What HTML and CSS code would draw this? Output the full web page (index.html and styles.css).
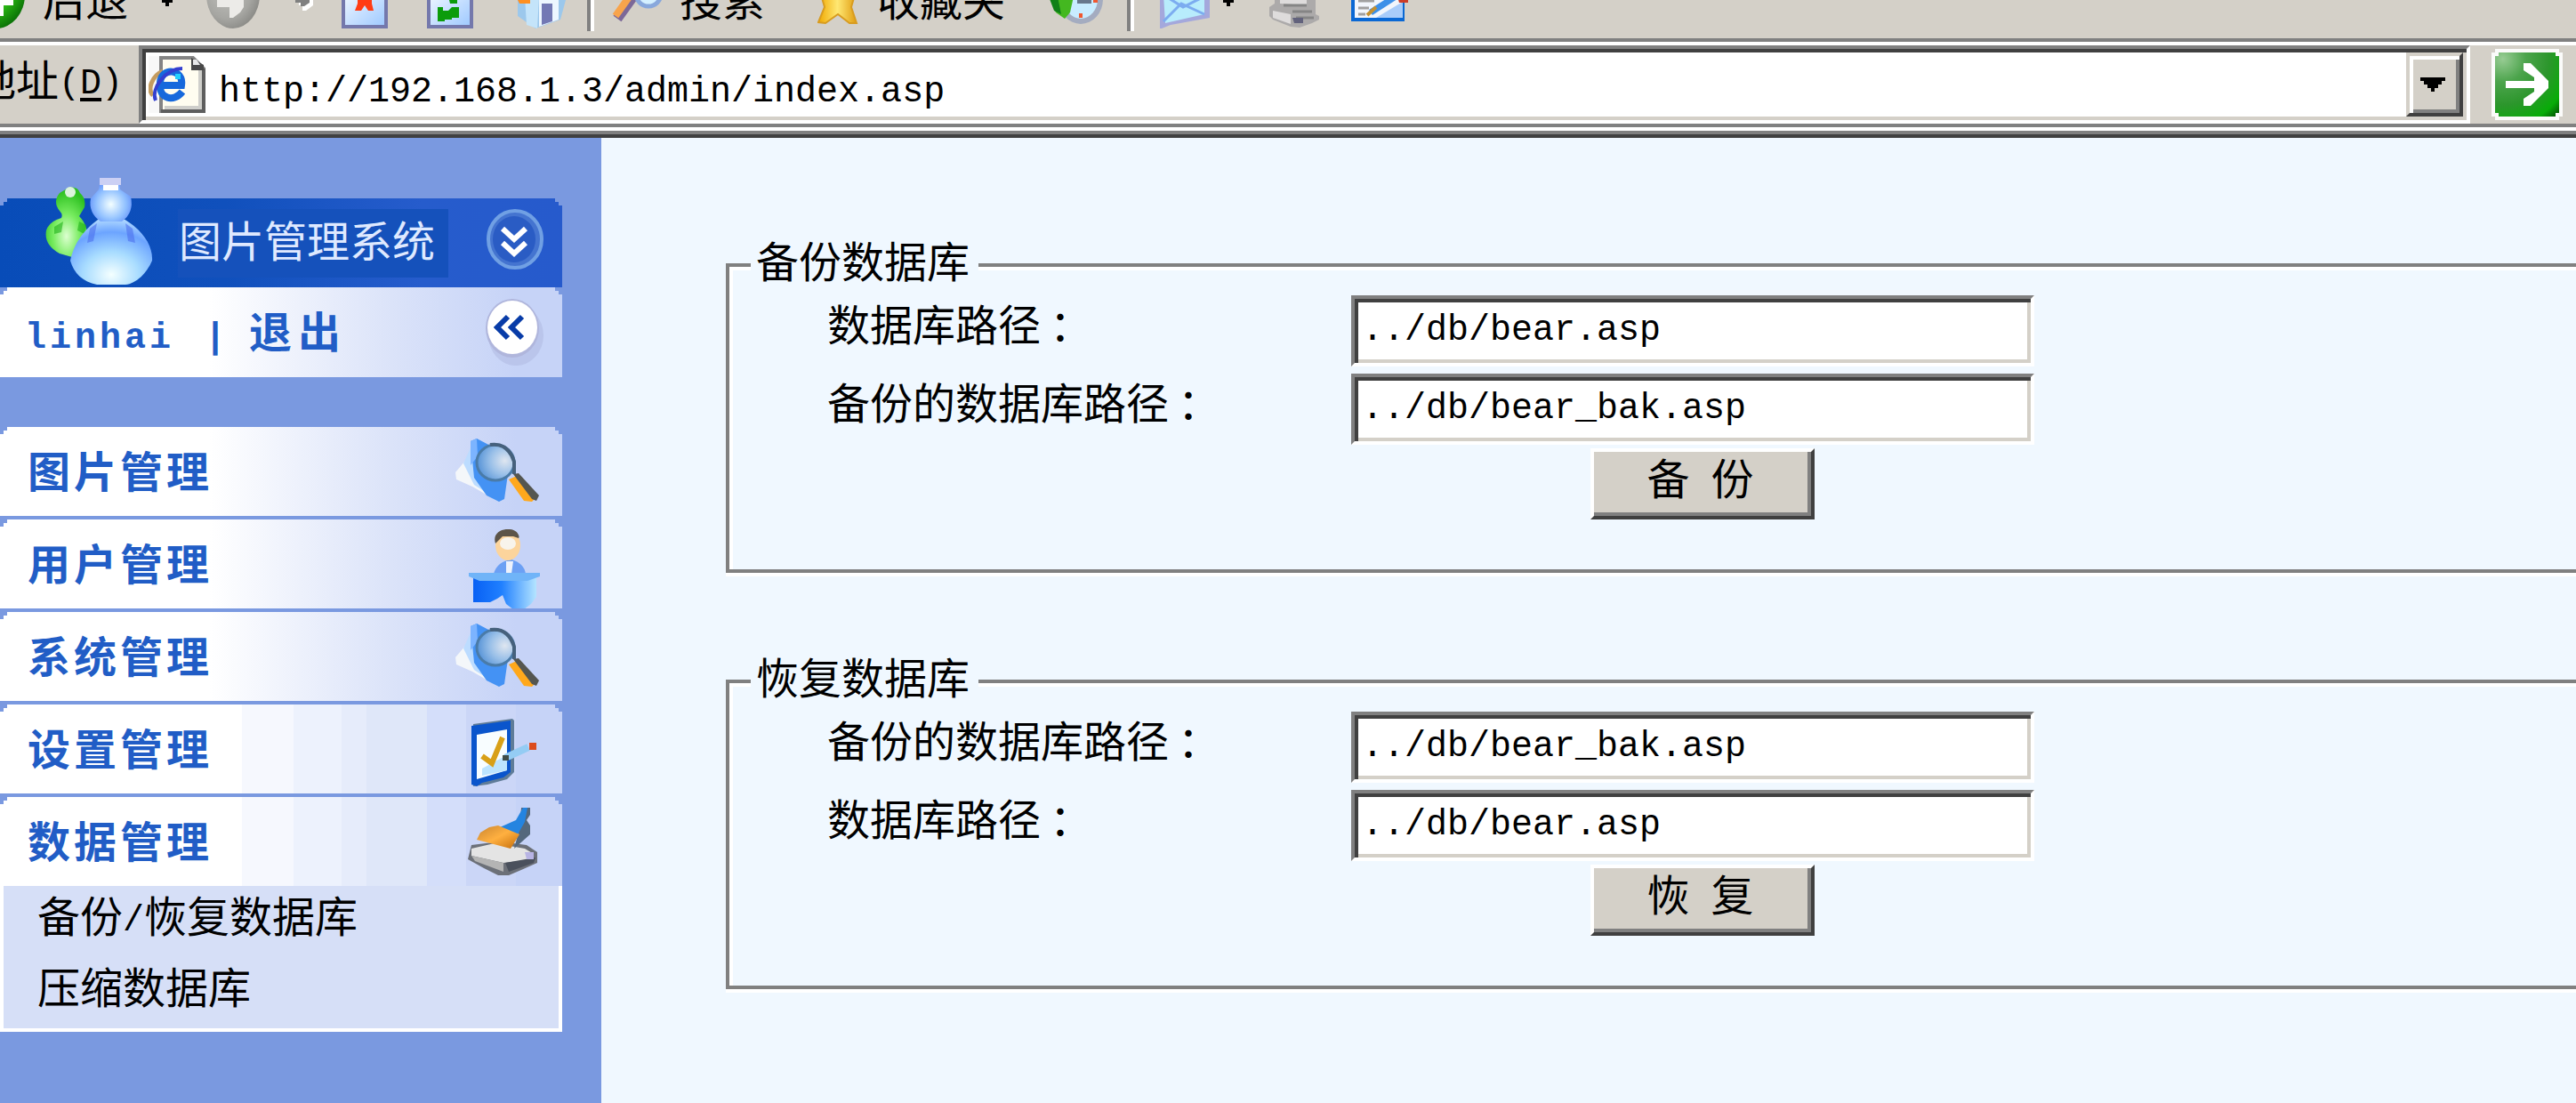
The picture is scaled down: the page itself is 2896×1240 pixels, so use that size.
FILE: index.html
```html
<!DOCTYPE html>
<html lang="zh-CN">
<head>
<meta charset="utf-8">
<title>图片管理系统</title>
<link rel="stylesheet" href="styles.css">
</head>
<body>
<svg class="defs" width="0" height="0" aria-hidden="true">
  <defs>
    <linearGradient id="paper" x1="0" y1="0" x2="1" y2="1"><stop offset="0" stop-color="#f4f9ff"/><stop offset="1" stop-color="#9cc8ff"/></linearGradient>
    <linearGradient id="gold" x1="0" y1="0" x2="1" y2="0"><stop offset="0" stop-color="#f0a800"/><stop offset=".5" stop-color="#ffe873"/><stop offset="1" stop-color="#e09c10"/></linearGradient>
    <radialGradient id="greenball" cx=".35" cy=".3" r=".75"><stop offset="0" stop-color="#9be890"/><stop offset=".6" stop-color="#2cbc14"/><stop offset="1" stop-color="#0a7006"/></radialGradient>
    <radialGradient id="grayball" cx=".4" cy=".4" r=".65"><stop offset="0" stop-color="#c4c4c0"/><stop offset=".7" stop-color="#a6a6a2"/><stop offset="1" stop-color="#8a8a86"/></radialGradient>
    <radialGradient id="gobtn" cx=".12" cy=".1" r="1.2"><stop offset="0" stop-color="#98cc94"/><stop offset=".3" stop-color="#4ca44c"/><stop offset=".6" stop-color="#2c962c"/><stop offset=".88" stop-color="#08ac08"/><stop offset="1" stop-color="#046404"/></radialGradient>
    <radialGradient id="bluefig" cx=".5" cy=".85" r=".85"><stop offset="0" stop-color="#f4ffff"/><stop offset=".4" stop-color="#a8dcff"/><stop offset=".75" stop-color="#6ca4ff"/><stop offset="1" stop-color="#b4dcff"/></radialGradient>
    <radialGradient id="bluehead" cx=".5" cy=".6" r=".6"><stop offset="0" stop-color="#f4ffff"/><stop offset=".6" stop-color="#90c0ff"/><stop offset="1" stop-color="#5c88f8"/></radialGradient>
    <radialGradient id="greenfig" cx=".5" cy=".7" r=".65"><stop offset="0" stop-color="#dcffd0"/><stop offset=".5" stop-color="#78ec60"/><stop offset="1" stop-color="#2cc020"/></radialGradient>
    <radialGradient id="lens" cx=".75" cy=".45" r=".8"><stop offset="0" stop-color="#dfe6f0"/><stop offset=".5" stop-color="#98bfe8"/><stop offset="1" stop-color="#4c8cd4"/></radialGradient>
    <linearGradient id="desk" x1="0" y1="0" x2="1" y2="0"><stop offset="0" stop-color="#0860f4"/><stop offset=".45" stop-color="#2080ff"/><stop offset="1" stop-color="#b4e4ff"/></linearGradient>
    <linearGradient id="brush" x1="0" y1="0" x2="1" y2="1"><stop offset="0" stop-color="#c88430"/><stop offset=".5" stop-color="#ffb040"/><stop offset="1" stop-color="#c46c08"/></linearGradient>
    <symbol id="magnifier" viewBox="0 0 96 74">
      <path d="M1 38 18 18 30 40 48 70 20 54 2 46Z" fill="#f4f7fa"/>
      <path d="M10 28 20 6 32 30 44 66 22 52Z" fill="#bcdcff"/>
      <path d="M18 3 25 0 44 10 60 40 56 68 50 71 36 64 22 44Z" fill="#4492f4"/>
      <path d="M18 3 25 0 26 20 18 30Z" fill="#7cb4ff"/>
      <path d="M61 46 70 42 92 66 87 71 78 70Z" fill="#ffa81c"/>
      <path d="M66 40 72 39 95 64 92 70 87 68Z" fill="#555650"/>
      <ellipse cx="46" cy="27" rx="21" ry="20" fill="url(#lens)" stroke="#4a7ba8" stroke-width="3"/>
      <path d="M40 7Q60 4 67 26L67 40" fill="none" stroke="#46617c" stroke-width="4"/>
    </symbol>
  </defs>
</svg>

<div class="toolbar">
  <svg class="tb back" width="30" height="43"><ellipse cx="-4" cy="-6" rx="32" ry="38" fill="url(#greenball)"/><path d="M0 0H15V6H4V18H0Z" fill="#fff"/></svg>
  <span class="tb-label after-back">后退</span>
  <svg class="tb caret" width="14" height="43"><path d="M1 0H13V3H9V7H5V3H1Z"/></svg>
  <svg class="tb forward" width="60" height="43"><ellipse cx="30" cy="-6" rx="30" ry="38" fill="url(#grayball)"/><path d="M12 0H42V8L38 14 30 20H26V8H12Z" fill="#ecebe8"/></svg>
  <svg class="tb caret2" width="20" height="43"><path d="M4 0H20V6L12 12H8V6H4Z" fill="#fff"/><path d="M0 0H16V3L10 7H6V3H0Z" fill="#808080"/></svg>
  <svg class="tb stop" width="52" height="43"><path d="M2-10H50V30H2Z" fill="url(#paper)" stroke="#7478ac" stroke-width="4"/><path d="M18-2H34V4L36 12H30L26 6 22 12H15L18 4Z" fill="#ff3c14"/></svg>
  <svg class="tb refresh" width="52" height="43"><path d="M2-10H50V30H2Z" fill="url(#paper)" stroke="#7478ac" stroke-width="4"/><path d="M24-4H34V4H26ZM12 8H18V12H24L28 8H36V20H28V22H20V24H12Z" fill="#0b9c0b"/></svg>
  <svg class="tb home" width="60" height="43"><path d="M0 0H6V18L26 32 54 22 60 0V-4H0Z" fill="#9cc8ec"/><path d="M14-4H30L28 32 16 28Z" fill="#c4e4fa"/><path d="M30 0 52-4V22L30 30Z" fill="#ecf6ff"/><path d="M33 4H45V24L33 28Z" fill="#7278b4"/><path d="M6 0H20V4H8Z" fill="#ff9020"/></svg>
  <i class="tb-sep sep1"></i>
  <svg class="tb search" width="56" height="43"><path d="M6 21 24-4" stroke="#7c6898" stroke-width="11"/><path d="M4 18 21-6" stroke="#f8a44c" stroke-width="8"/><ellipse cx="41" cy="-7" rx="14" ry="14" fill="#d4f0ff" stroke="#88a8dc" stroke-width="5"/></svg>
  <span class="tb-label after-search">搜索</span>
  <svg class="tb star" width="46" height="43"><path d="M4-6H42L38 8 44 26 36 26 23 16 9 26 1 25 8 8Z" fill="url(#gold)" stroke="#d89c20" stroke-width="2"/></svg>
  <span class="tb-label after-star">收藏夹</span>
  <svg class="tb history" width="62" height="43"><ellipse cx="36" cy="-1" rx="25" ry="28" fill="#a4acc0"/><ellipse cx="36" cy="-1" rx="19" ry="22" fill="#c8ecff"/><path d="M0-4H28L24 14 18 21 8 14Z" fill="#44b820"/><path d="M0-4H10L14 16 6 12Z" fill="#108018"/><path d="M34 15H38V20H34ZM50-2H55V3H50Z" fill="#f05830"/><path d="M32 0H48V4H32Z" fill="#68788c"/></svg>
  <i class="tb-sep sep2"></i>
  <svg class="tb mail" width="56" height="43"><path d="M0-6H56V20L12 28 2 32H0Z" fill="#a4a8dc"/><path d="M4-6H50V16L6 26Z" fill="#b8ecfc"/><path d="M4 24 24 4 50 16M10-2 26 8 46-2" fill="none" stroke="#7cacf0" stroke-width="3"/></svg>
  <svg class="tb caret3" width="14" height="43"><path d="M1 0H13V3H9V7H5V3H1Z"/></svg>
  <svg class="tb printer" width="56" height="43"><path d="M6-4H52V16L56 18V22L48 26 34 31 24 30 4 22 0 18V8L6 4Z" fill="#acaaaa"/><path d="M12-4H42V6L12 4ZM4 12 24 16V27L4 20Z" fill="#dedcdc"/><path d="M16 6H42M26 13H48M30 20H50" stroke="#858585" stroke-width="3"/><path d="M26 20H38V26H28Z" fill="#62627c"/></svg>
  <svg class="tb edit" width="66" height="43"><path d="M2-6H58V22H2Z" fill="#f2f6fc" stroke="#0a68d4" stroke-width="4"/><path d="M8 1H26M8 9H20M8 16H16" stroke="#a0a0a0" stroke-width="3"/><path d="M28 20 58 2V20Z" fill="#a8ccfa"/><path d="M22 14 50-4" stroke="#3c90e8" stroke-width="7"/><path d="M18 17 28 8" stroke="#c49030" stroke-width="4"/><path d="M52-4H64V3H54Z" fill="#cc3c28"/></svg>
</div>

<div class="addressbar">
  <span class="addr-label">地址<span class="latin">(<u>D</u>)</span></span>
  <div class="addr-field">
    <svg class="ie" width="66" height="66">
      <path d="M0 0H14V64H0Z" fill="#f8f8f8"/>
      <path d="M14 2H50L62 14V62H14Z" fill="#fffdf0" stroke="#848484" stroke-width="4"/>
      <path d="M62 14V62H14" fill="none" stroke="#5e5e5e" stroke-width="4"/>
      <path d="M58 16V58H18" fill="none" stroke="#cfcfcb" stroke-width="4"/>
      <path d="M48 2V16H62V10Z" fill="#484848"/>
      <path d="M50 4H54L58 10H50Z" fill="#e8e8e8"/>
      <path d="M5 44C-2 38 4 22 16 17" fill="none" stroke="#c49c60" stroke-width="5"/>
      <path d="M12 33H37C40 14 14 12 13 30 11 49 29 52 38 40" fill="none" stroke="#1769dc" stroke-width="8"/>
      <path d="M8 50C2 36 20 14 38 14" fill="none" stroke="#3440d0" stroke-width="4"/>
      <path d="M30 20H36V26H30Z" fill="#24d0ff"/>
    </svg>
    <span class="url">http://192.168.1.3/admin/index.asp</span>
    <div class="drop"><svg width="28" height="18" shape-rendering="crispEdges"><path d="M0 0H28V4H24V8H20V12H16V16H12V12H8V8H4V4H0Z"/></svg></div>
  </div>
  <svg class="go" width="80" height="80">
    <path d="M4 0H76V4H80V76H76V80H4V76H0V4H4Z" fill="#fbfbfa"/>
    <path d="M8 4H72V8H76V72H72V76H8V72H4V8H8Z" fill="url(#gobtn)"/>
    <path d="M16 36H48V32L36 24V16H44L64 36V44L44 64H36V56L48 48V44H16Z" fill="#fff"/>
  </svg>
</div>

<div class="page">
  <nav class="sidebar">
    <div class="brand">
      <svg class="people" width="122" height="122">
        <path d="M26 12Q36 10 39 18Q46 24 44 34L38 44Q52 58 44 80L30 90 16 86Q-2 76 1 60 4 50 18 46Q20 42 16 38 8 28 16 18Z" fill="url(#greenfig)"/>
        <ellipse cx="28" cy="17" rx="6" ry="6" fill="#dcf4dc"/>
        <path d="M10 56 20 50 18 62 10 64ZM38 50 46 54 44 64 36 60Z" fill="#1eb018" opacity=".6"/>
        <path d="M62 46H86C108 58 121 76 120 94 114 108 102 120 90 121H58C42 118 32 108 28 94 32 74 44 58 62 46Z" fill="url(#bluefig)"/>
        <path d="M50 58 58 52 54 72 47 74ZM98 58 90 52 93 72 101 74Z" fill="#4c70ec" opacity=".6"/>
        <path d="M62 2H84V14L96 22Q100 40 86 50H62Q48 40 51 24L60 14Z" fill="url(#bluehead)"/>
        <path d="M61 1H85V9H61Z" fill="#ccd0f4"/>
        <path d="M65 9H82V15H65Z" fill="#fff"/>
      </svg>
      <span class="brand-name">图片管理系统</span>
      <svg class="ring" width="66" height="70"><ellipse cx="33" cy="34" rx="30" ry="32" fill="#4474d0" stroke="#70a0e4" stroke-width="4"/><ellipse cx="32" cy="34" rx="24" ry="26" fill="#2a5cc4"/><path d="M19 22 32 34 45 22M19 38 32 50 45 38" fill="none" stroke="#fff" stroke-width="6"/></svg>
    </div>
    <div class="row user">
      <span class="who">linhai <i>|</i> <b>退出</b></span>
      <svg class="fold" width="70" height="84"><ellipse cx="38" cy="43" rx="31" ry="34" fill="#aab4dc" opacity=".45"/><ellipse cx="34" cy="35" rx="30" ry="33" fill="#b0b6dc"/><ellipse cx="34" cy="34" rx="28" ry="30" fill="#fff"/><path d="M29 22 17 34 29 46M45 22 33 34 45 46" fill="none" stroke="#083ca8" stroke-width="6"/></svg>
    </div>
    <div class="menu">
      <div class="row"><span>图片管理</span><svg class="ic mag" width="96" height="74"><use href="#magnifier"/></svg></div>
      <div class="row"><span>用户管理</span>
        <svg class="ic person" width="80" height="90">
          <path d="M28 50Q32 36 48 34 62 38 64 50Z" fill="#6ca0f4"/><path d="M42 36H50L48 50H42Z" fill="#eef2fc"/>
          <ellipse cx="44" cy="18" rx="14" ry="17" fill="#fcd49c"/><path d="M30 16C26 4 38-1 46 0 54 0 58 8 56 10L50 8 38 8Z" fill="#5c5448"/><ellipse cx="44" cy="16" rx="9" ry="7" fill="#f8f4ec"/>
          <path d="M5 54 30 56 76 54V76L70 84 62 90H50L42 84 38 74 32 78 24 82H5Z" fill="url(#desk)"/>
          <path d="M0 49H80V53L66 58H12L0 53Z" fill="#70b4f8"/>
        </svg>
      </div>
      <div class="row"><span>系统管理</span><svg class="ic mag" width="96" height="74"><use href="#magnifier"/></svg></div>
      <div class="row banded"><span>设置管理</span>
        <svg class="ic board" width="78" height="78">
          <path d="M4 6 48 0 50 2V60L42 68 20 74 4 76Z" fill="#5f7c98"/><path d="M2 8 46 2V60L38 66 14 72 8 76 2 74Z" fill="#0a55cc"/>
          <path d="M8 18 42 12V58L8 68Z" fill="#f8fdff"/><path d="M14 64V56L36 44H42V58Z" fill="#bce4ff"/>
          <path d="M14 42 25 50 37 21" fill="none" stroke="#d8a018" stroke-width="6"/><path d="M40 44 66 32" stroke="#94ccf4" stroke-width="8"/><path d="M37 41H44V47H37Z" fill="#404c48"/><path d="M67 27H75V35H67Z" fill="#dc4c1c"/>
        </svg>
      </div>
      <div class="row banded"><span>数据管理</span>
        <svg class="ic scan" width="80" height="78">
          <path d="M4 42 36 38 66 42 78 50V62L60 70 46 76H34L18 68 0 58Z" fill="#6c7078"/><path d="M4 46 30 40 64 46 74 52V58L40 62 4 54Z" fill="#e4e4e4"/><path d="M4 54 40 62V72L8 60Z" fill="#b4b4b4"/><path d="M42 62 76 56 74 62 46 72Z" fill="#4a505c"/><path d="M64 50H74V58H66Z" fill="#b8b4e4"/>
          <path d="M60 0H70V8L66 14 70 20V30L52 46 58 24Z" fill="#54687c"/><path d="M36 22 54 14 62 0H67L64 16 56 30Z" fill="#2484e0"/>
          <path d="M24 22 34 20 58 30 48 46 10 36 14 28Z" fill="url(#brush)"/>
        </svg>
      </div>
      <ul class="submenu"><li>备份<span class="latin">/</span>恢复数据库</li><li>压缩数据库</li></ul>
    </div>
  </nav>

  <main class="content">
    <section class="group">
      <h2><span>备份数据库</span></h2>
      <form class="fields">
        <label>数据库路径<span class="colon">：</span></label><input type="text" value="../db/bear.asp">
        <label>备份的数据库路径<span class="colon">：</span></label><input type="text" value="../db/bear_bak.asp">
        <button type="button"><span>备</span><span>份</span></button>
      </form>
    </section>
    <section class="group">
      <h2><span>恢复数据库</span></h2>
      <form class="fields">
        <label>备份的数据库路径<span class="colon">：</span></label><input type="text" value="../db/bear_bak.asp">
        <label>数据库路径<span class="colon">：</span></label><input type="text" value="../db/bear.asp">
        <button type="button"><span>恢</span><span>复</span></button>
      </form>
    </section>
  </main>
</div>
</body>
</html>
```
FILE: styles.css
```css
* { box-sizing: border-box; }
body {
  margin: 0;
  width: 2896px;
  height: 1240px;
  overflow: hidden;
  background: #d4d0c8;
  color: #000;
  font: 48px/48px "Noto Sans CJK SC", sans-serif;
}
.defs { position: absolute; }
.latin { font: 40px/48px "Liberation Mono", monospace; }

/* toolbar */
.toolbar {
  display: flex;
  height: 47px;
  border-bottom: 4px solid #808080;
  overflow: hidden;
}
.tb { flex: none; display: block; }
.tb-label { flex: none; margin-top: -27px; white-space: nowrap; }
.after-back { margin-left: 18px; width: 96px; }
.caret { margin-left: 37px; }
.forward { margin-left: 37px; }
.caret2 { margin-left: 40px; }
.stop { margin-left: 32px; }
.refresh { margin-left: 44px; }
.home { margin-left: 44px; }
.tb-sep { flex: none; width: 8px; height: 35px; border-left: 4px solid #808080; border-right: 4px solid #fff; }
.sep1 { margin-left: 24px; }
.search { margin-left: 20px; }
.after-search { margin-left: 20px; width: 96px; }
.star { margin-left: 59px; }
.after-star { margin-left: 21px; width: 144px; }
.history { margin-left: 49px; }
.sep2 { margin-left: 26px; }
.mail { margin-left: 29px; }
.caret3 { margin-left: 14px; }
.printer { margin-left: 39px; }
.edit { margin-left: 36px; }

/* address bar */
.addressbar {
  display: flex;
  height: 96px;
  border-top: 4px solid #fff;
  border-bottom: 4px solid #808080;
}
.addr-label { flex: none; width: 186px; margin-left: -30px; padding-top: 12px; white-space: nowrap; }
.addr-label .latin { vertical-align: 3px; }
.addr-label u { text-underline-offset: 5px; text-decoration-thickness: 4px; }
.addr-field {
  display: flex;
  width: 2621px;
  height: 88px;
  padding: 4px;
  border: 4px solid;
  border-color: #808080 #fff #fff #808080;
  background: #fff;
  box-shadow: inset 4px 4px #404040, inset -4px -4px #d4d0c8;
}
.ie { flex: none; margin: 4px 0 0 3px; }
.url { flex: 1; margin-left: 13px; padding-top: 21px; font: 40px/48px "Liberation Mono", monospace; }
.drop {
  width: 64px;
  height: 72px;
  padding: 24px 0 0 12px;
  border: 4px solid;
  border-color: #d4d0c8 #404040 #404040 #d4d0c8;
  background: #d4d0c8;
  box-shadow: inset 4px 4px #fff, inset -4px -4px #808080;
}
.drop svg { display: block; }
.go { display: block; margin: 4px 0 0 24px; }

/* page frame */
.page {
  display: flex;
  height: 1097px;
  border-top: 4px solid #fff;
  box-shadow: inset 0 4px #808080, inset 0 8px #404040;
  padding-top: 8px;
}
.sidebar { flex: none; width: 676px; padding-top: 68px; background: #7a99e0; }
.brand { position: relative; display: flex; width: 632px; height: 100px; }
.brand::before {
  content: "";
  position: absolute;
  inset: 0;
  background: linear-gradient(90deg, #084cb8 0%, #1050bc 40%, #265ccc 75%, #265acc 100%);
  clip-path: polygon(0 8px, 4px 8px, 4px 4px, 8px 4px, 8px 0, calc(100% - 8px) 0, calc(100% - 8px) 4px, calc(100% - 4px) 4px, calc(100% - 4px) 8px, 100% 8px, 100% 100%, 0 100%);
}
.brand > * { position: relative; flex: none; }
.people { margin: -24px 0 0 51px; }
.brand-name {
  width: 304px;
  height: 77px;
  margin: 12px 0 0 27px;
  padding: 9px 0 0 1px;
  background: #1551bb;
  color: #dfe9ff;
}
.ring { margin: 12px 0 0 42px; }

.row {
  display: flex;
  width: 632px;
  height: 100px;
  padding-left: 31px;
  background: linear-gradient(90deg, #fff 0, #fff 236px, #dbe3f9 440px, #c6d3f7 580px);
  clip-path: polygon(0 8px, 4px 8px, 4px 4px, 8px 4px, 8px 0, calc(100% - 8px) 0, calc(100% - 8px) 4px, calc(100% - 4px) 4px, calc(100% - 4px) 8px, 100% 8px, 100% 100%, 0 100%);
  color: #215dc6;
  font-weight: bold;
}
.row span { flex: 1; padding-top: 23px; letter-spacing: 4px; white-space: pre; }
.row svg { flex: none; }
.banded { background: linear-gradient(90deg, #fff 272px, #f6f8fe 272px 330px, #edf2fd 330px 384px, #e6ecfb 384px 412px, #dfe7f9 412px 480px, #d4defa 480px 524px, #cbd6f7 524px 580px, #c6d3f7 580px); }
.row.user { height: 101px; padding-left: 28px; }
.row .who { padding-top: 23px; font: bold 40px/48px "Liberation Mono", monospace; }
.who i { display: inline-block; width: 28px; padding-left: 6px; font-style: normal; }
.who b { font: bold 48px/48px "Noto Sans CJK SC", sans-serif; letter-spacing: 7px; }
.fold { margin: 11px 20px 0 0; }
.menu { display: flex; flex-direction: column; gap: 4px; margin-top: 56px; }
.mag { margin: 13px 25px 0 0; }
.person { margin: 11px 25px 0 0; }
.board { margin: 16px 26px 0 0; }
.scan { margin: 12px 26px 0 0; }
.submenu {
  width: 632px;
  height: 164px;
  margin: -4px 0 0;
  padding: 6px 0 0 38px;
  border: 4px solid #fff;
  border-top: 0;
  background: #d6dff7;
  list-style: none;
}
.submenu li { height: 80px; padding-top: 1px; }
.submenu .latin { vertical-align: 2px; }

/* forms */
.content { flex: 1; overflow: hidden; padding: 141px 0 0 140px; background: #f0f8ff; }
.group {
  width: 2200px;
  height: 348px;
  margin-bottom: 120px;
  border: 4px solid #808080;
  box-shadow: inset 4px 4px #fff, 0 4px #fff;
}
.group h2 { display: flex; align-items: flex-end; height: 32px; margin: 0 0 0 24px; font-size: 48px; font-weight: normal; }
.group h2 span { height: 48px; margin-bottom: 17px; padding: 0 10px 0 6px; background: #f0f8ff; }
.fields { display: grid; grid-template-columns: 588px 768px; row-gap: 8px; margin-left: 112px; }
label { margin-left: -2px; padding-top: 6px; white-space: nowrap; }
.colon { padding-left: 10px; }
input {
  width: 768px;
  height: 80px;
  margin-left: -1px;
  border: 4px solid;
  border-color: #808080 #fff #fff #808080;
  border-radius: 0;
  padding: 0 8px 2px;
  background: #fff;
  box-shadow: inset 4px 4px #404040, inset -4px -4px #d4d0c8;
  color: #000;
  font: 40px/48px "Liberation Mono", monospace;
}
button {
  grid-column: 2;
  display: flex;
  justify-content: center;
  gap: 24px;
  width: 252px;
  height: 80px;
  margin: -4px 0 0 268px;
  padding: 3px 5px 0 0;
  border: 4px solid;
  border-color: #fff #404040 #404040 #fff;
  border-radius: 0;
  background: #d4d0c8;
  box-shadow: inset -4px -4px #808080;
  color: #000;
  font: 48px/48px "Noto Sans CJK SC", sans-serif;
}
```
